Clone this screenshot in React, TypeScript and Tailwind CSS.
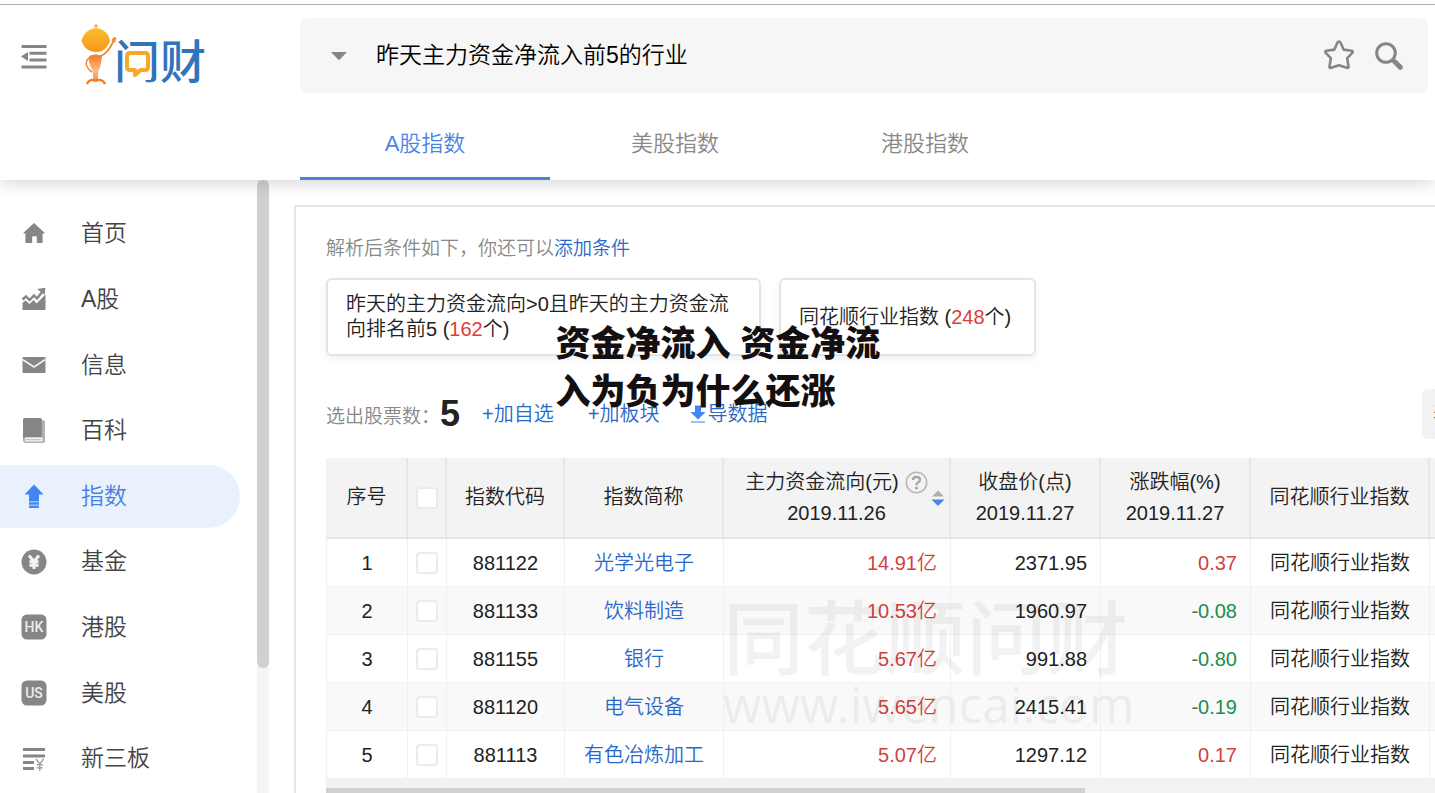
import type { ReactNode } from 'react';

interface NavItem {
  label: string;
  icon: ReactNode;
  active?: boolean;
}

interface Row {
  code: string;
  name: string;
  flow: string;
  price: string;
  change: number;
}

const svgProps = { width: 26, height: 26, viewBox: '0 0 26 26', 'aria-hidden': true } as const;

function Badge({ text }: { text: string }) {
  return (
    <svg {...svgProps}>
      <rect x="0.5" y="0.5" width="25" height="25" rx="5.5" fill="#868686" />
      <text x="13" y="18" textAnchor="middle" fontSize="14" fontWeight="500" fontFamily="Roboto, sans-serif" fill="#ececec">
        {text}
      </text>
    </svg>
  );
}

const navItems: NavItem[] = [
  {
    label: '首页',
    icon: (
      <svg {...svgProps}>
        <path d="M13 2 23.5 11.8Q24 12.6 23 12.6H21.6V21Q21.6 22 20.6 22H15.8V16.2Q15.8 15.2 14.8 15.2H12.2Q11.2 15.2 11.2 16.2V22H5.4Q4.4 22 4.4 21V12.6H3Q2 12.6 2.5 11.8Z" fill="#868686" />
      </svg>
    ),
  },
  {
    label: 'A股',
    icon: (
      <svg {...svgProps}>
        <path d="M1.5 24V17L4.5 14.5 8.5 18 12.5 14 15.5 17.5 24.5 8.5V23Q24.5 24 23.5 24Z" fill="#868686" />
        <path d="M1.5 13.5 5 10.5 8.5 14 13 9.5 16 12.5 21.5 5.5" fill="none" stroke="#868686" strokeWidth="2.4" />
        <path d="M16 3 24.5 1.8 23.5 9Z" fill="#868686" />
      </svg>
    ),
  },
  {
    label: '信息',
    icon: (
      <svg {...svgProps}>
        <rect x="1.5" y="5" width="23" height="16" rx="1.2" fill="#868686" />
        <path d="M1.5 7.5 13 15 24.5 7.5" fill="none" stroke="#f0f0f0" strokeWidth="1.8" />
      </svg>
    ),
  },
  {
    label: '百科',
    icon: (
      <svg {...svgProps}>
        <path d="M20 2.5 24 4V24Q24 26 22 26H5Q2 26 2 23V20H20Z" fill="#b0b0b0" />
        <path d="M4.5 20.5H21.5V24.5H4.5Q3.2 22.5 4.5 20.5Z" fill="#f4f4f4" />
        <path d="M2 22V2.5Q2 1 3.5 1H19Q20.8 1 20.8 2.8V20H4.5Q3 20 2 22Z" fill="#868686" />
        <path d="M4.5 22.7H20" stroke="#aaaaaa" strokeWidth="0.8" />
      </svg>
    ),
  },
  {
    label: '指数',
    active: true,
    icon: (
      <svg {...svgProps}>
        <path d="M13 1.5 22.5 11.5H18V18.5H8V11.5H3.5Z" fill="#4285f4" />
        <path d="M8 19.2H18V21.7H8ZM8 22.6H18V25H8Z" fill="#4285f4" />
      </svg>
    ),
  },
  {
    label: '基金',
    icon: (
      <svg {...svgProps}>
        <circle cx="13" cy="13" r="12.5" fill="#868686" />
        <path d="M8 6.5 13 12.5 18 6.5M13 12V20M8.5 12.8H17.5M8.5 16.2H17.5" fill="none" stroke="#f4f4f4" strokeWidth="3" />
      </svg>
    ),
  },
  { label: '港股', icon: <Badge text="HK" /> },
  { label: '美股', icon: <Badge text="US" /> },
  {
    label: '新三板',
    icon: (
      <svg {...svgProps}>
        <path d="M2 3.5H24M2 10H24M2 16.5H13M2 22.5H13" stroke="#868686" strokeWidth="2.8" />
        <path d="M15 13 18.8 18 22.6 13M18.8 18V25M15.5 18.8H22M15.5 21.8H22" fill="none" stroke="#999999" strokeWidth="1.3" />
      </svg>
    ),
  },
];

const tabs = ['A股指数', '美股指数', '港股指数'];

const rows: Row[] = [
  { code: '881122', name: '光学光电子', flow: '14.91亿', price: '2371.95', change: 0.37 },
  { code: '881133', name: '饮料制造', flow: '10.53亿', price: '1960.97', change: -0.08 },
  { code: '881155', name: '银行', flow: '5.67亿', price: '991.88', change: -0.8 },
  { code: '881120', name: '电气设备', flow: '5.65亿', price: '2415.41', change: -0.19 },
  { code: '881113', name: '有色冶炼加工', flow: '5.07亿', price: '1297.12', change: 0.17 },
];

function Logo() {
  return (
    <svg width="140" height="66" viewBox="0 0 140 66" role="img" aria-label="问财">
      <defs>
        <linearGradient id="head" x1="0" y1="0" x2="0" y2="1">
          <stop offset="0" stopColor="#fbc02a" />
          <stop offset="1" stopColor="#f7941f" />
        </linearGradient>
        <linearGradient id="body" x1="0" y1="0" x2="0" y2="1">
          <stop offset="0" stopColor="#f47b20" />
          <stop offset="0.6" stopColor="#fbb98a" />
          <stop offset="1" stopColor="#f58a3c" />
        </linearGradient>
      </defs>
      {/* Mascot */}
      <circle cx="17" cy="4" r="1.8" fill="#f5b04a" />
      <path d="M17 6C25 7 30 12 31 19C28 27 23 30 17 30C10 30 5 26 2.5 19C4 12 9 7 17 6Z" fill="url(#head)" />
      <path d="M20 35C28 32 32 25 34.5 19" fill="none" stroke="#f47b20" strokeWidth="1.8" />
      <ellipse cx="35" cy="18" rx="2" ry="3" transform="rotate(25 35 18)" fill="#f58a3c" />
      <path d="M10 34Q16 31 23 34Q22 44 19.5 49L18.5 60H14.5L13.5 48Q9 41 10 34Z" fill="url(#body)" />
      <path d="M12 35C5 38 6 45 13 50" fill="none" stroke="#f58a3c" strokeWidth="1.6" />
      <path d="M16 58Q10 57 8 62M17 58Q24 57 26 62" fill="none" stroke="#f47b20" strokeWidth="2.4" />
      {/* Wordmark with a speech bubble in its first character */}
      <text x="35" y="56" fontSize="46" fontWeight="500" fontFamily="Noto Sans CJK SC, sans-serif" fill="#2f74bd">
        问财
      </text>
      <rect x="45" y="28" width="27" height="30" fill="#ffffff" />
      <path d="M51 31H66Q69 31 69 34V45Q69 48 66 48H61.5L56 53V48H51Q48 48 48 45V34Q48 31 51 31Z" fill="none" stroke="#f9a72b" strokeWidth="4" strokeLinejoin="round" />
    </svg>
  );
}

function Header() {
  return (
    <header className="relative z-10 shrink-0 bg-white shadow-[0_1px_18px_rgba(0,0,0,0.2)]">
      <div className="mt-1 h-px bg-[#b4b4b4]" />
      <div className="flex items-start pt-[13px] pr-[7px]">
        <div className="flex w-[300px] shrink-0 items-center gap-[32px] pt-[4px] pl-[21px]">
          <button aria-label="收起菜单" className="pt-[4px] text-[#868686]">
            <svg width="26" height="26" viewBox="0 0 26 26" aria-hidden>
              <path d="M0.5 2.5H25.5M8.5 9.3H25.5M8.5 16H25.5M0.5 23H25.5" stroke="currentColor" strokeWidth="3" />
              <path d="M0 12.5 7 8V17Z" fill="currentColor" />
            </svg>
          </button>
          <Logo />
        </div>
        <form className="flex h-[75px] min-w-0 flex-1 items-center rounded-md bg-[#f6f6f6] pr-[25px] pl-[30px]">
          <button type="button" aria-label="展开" className="text-[#868686]">
            <svg width="18" height="10" viewBox="0 0 18 10" aria-hidden>
              <path d="M1 1H17L9.8 8.5Q9 9.3 8.2 8.5Z" fill="currentColor" />
            </svg>
          </button>
          <input
            aria-label="搜索"
            defaultValue="昨天主力资金净流入前5的行业"
            className="ml-[28px] min-w-0 flex-1 bg-transparent text-[23px] text-black outline-none"
          />
          <button type="button" aria-label="收藏" className="mr-[20px] text-[#868686]">
            <svg width="32" height="32" viewBox="0 1 32 32" fill="none" stroke="currentColor" strokeWidth="2.6" strokeLinejoin="round" aria-hidden>
              <path d="M16 2.5Q17 2.5 17.5 3.5L20.6 10.6L28.5 11.8Q30.5 12.3 29.3 13.9L24.2 19.2L25.5 27.6Q25.6 29.4 23.8 28.8L16 26.2L8.2 28.8Q6.4 29.4 6.5 27.6L7.8 19.2L2.7 13.9Q1.5 12.3 3.5 11.8L11.4 10.6L14.5 3.5Q15 2.5 16 2.5Z" />
            </svg>
          </button>
          <button aria-label="搜索" className="text-[#868686]">
            <svg width="28" height="28" viewBox="0 0 28 28" fill="none" stroke="currentColor" aria-hidden>
              <circle cx="11" cy="11" r="9.3" strokeWidth="3" />
              <path d="M17.5 17.5 20 20" strokeWidth="3" />
              <path d="M19.8 19.8 25.3 25.3" strokeWidth="5" strokeLinecap="round" />
            </svg>
          </button>
        </form>
      </div>
      <nav className="flex pt-[12px] pl-[300px]">
        {tabs.map((tab, i) => (
          <a
            key={tab}
            href="#"
            className={`flex h-[75px] w-[250px] items-center justify-center border-b-[3px] pt-[4px] text-[22px] ${
              i === 0 ? 'border-[#4a83d8] text-[#4a83e8]' : 'border-transparent text-[#888888]'
            }`}
          >
            {tab}
          </a>
        ))}
      </nav>
    </header>
  );
}

function Sidebar() {
  return (
    <aside className="flex w-[269px] shrink-0 justify-between">
      <nav className="flex w-[240px] flex-col justify-between pt-[22px] pb-[3px]">
        {navItems.map((item) => (
          <a
            key={item.label}
            href="#"
            className={`flex h-[63px] items-center gap-[34px] pl-[21px] text-[23px] ${
              item.active ? 'rounded-r-full bg-[#e9f1fd] text-[#4a7fe0]' : 'text-[#444444]'
            }`}
          >
            {item.icon}
            {item.label}
          </a>
        ))}
      </nav>
      <div className="w-3 bg-[#f4f4f4]">
        <div className="h-[488px] rounded-full bg-[#d0d0d0]" />
      </div>
    </aside>
  );
}

const card =
  'flex h-[78px] shrink-0 items-center rounded-md border-2 border-[#e4e4e4] px-[18px] leading-[25px] shadow-[0_4px_8px_rgba(0,0,0,0.06)]';

function Conditions() {
  return (
    <div className="flex gap-[18px]">
      <div className={`w-[435px] ${card}`}>
        <p>
          昨天的主力资金流向&gt;0且昨天的主力资金流向排名前5 (<span className="text-[#df3c36]">162</span>个)
        </p>
      </div>
      <div className={`w-[257px] ${card}`}>
        <p>
          同花顺行业指数 (<span className="text-[#df3c36]">248</span>个)
        </p>
      </div>
    </div>
  );
}

function Toolbar() {
  return (
    <div className="mt-[33px] flex h-[50px] items-center text-[#2a68c8]">
      <span className="pt-[6px] text-[19px] text-[#888888]">选出股票数：</span>
      <strong className="text-[36px] font-bold text-[#222222]">5</strong>
      <button className="ml-[22px]">+加自选</button>
      <button className="ml-[34px]">+加板块</button>
      <button className="ml-[31px] flex items-center">
        <svg width="17" height="20" viewBox="0 0 17 20" aria-hidden>
          <path d="M5 1.5H11V8H15.5L8 15.5 0.5 8H5Z" fill="#4285f4" />
          <path d="M1 18H15" stroke="#7fa9ee" strokeWidth="1.5" />
        </svg>
        导数据
      </button>
      <button className="ml-auto h-[50px] w-[108px] shrink-0 rounded-md bg-[#f2f2f2] pl-[11px] text-left text-[#444444]">
        表格展示
      </button>
    </div>
  );
}

const th = 'border-r-2 border-b-2 border-[#e6e6e6] font-[350]';
const td = 'border-r border-b border-[#f0f0f0]';
const box = 'mx-auto block size-[22px] appearance-none rounded-sm border-2 border-[#ebebeb] bg-white';

function ResultTable() {
  return (
    <div className="relative mt-[19px]">
      <table className="w-full table-fixed border-separate border-spacing-0 border-l border-[#f0f0f0]">
        <colgroup>
          <col className="w-[81px]" />
          <col className="w-[39px]" />
          <col className="w-[118px]" />
          <col className="w-[159px]" />
          <col className="w-[227px]" />
          <col className="w-[150px]" />
          <col className="w-[150px]" />
          <col className="w-[179px]" />
          <col />
        </colgroup>
        <thead>
          <tr className="h-[81px] bg-[#f3f3f3] leading-[31px]">
            <th className={th}>序号</th>
            <th className={th}>
              <input type="checkbox" aria-label="全选" className={box} />
            </th>
            <th className={th}>指数代码</th>
            <th className={th}>指数简称</th>
            <th className={`relative ${th}`}>
              <div className="flex items-center justify-center gap-[6px]">
                主力资金流向(元)
                <svg width="23" height="23" viewBox="0 0 23 23" aria-hidden>
                  <circle cx="11.5" cy="11.5" r="10.2" fill="none" stroke="#b8b8b8" strokeWidth="1.6" />
                  <path d="M8 9Q8 5.8 11.5 5.8Q15 5.8 15 8.8Q15 10.5 13 11.6Q11.5 12.5 11.5 14.3" fill="none" stroke="#a4a4a4" strokeWidth="2.3" />
                  <circle cx="11.5" cy="17" r="1.5" fill="#a4a4a4" />
                </svg>
              </div>
              2019.11.26
              <button aria-label="排序" className="absolute top-[32px] right-[4px]">
                <svg width="14" height="17" viewBox="0 0 14 17" aria-hidden>
                  <path d="M7 0.5 13 6.5H1Z" fill="#b0b0b0" />
                  <path d="M7 16 0.5 9.5H13.5Z" fill="#4a83e8" />
                </svg>
              </button>
            </th>
            <th className={th}>
              收盘价(点)
              <br />
              2019.11.27
            </th>
            <th className={th}>
              涨跌幅(%)
              <br />
              2019.11.27
            </th>
            <th className={th}>同花顺行业指数</th>
            <th className={th} />
          </tr>
        </thead>
        <tbody>
          {rows.map((row, i) => (
            <tr key={row.code} className="h-12 text-center even:bg-[#f9f9f9]">
              <td className={td}>{i + 1}</td>
              <td className={td}>
                <input type="checkbox" aria-label={row.name} className={box} />
              </td>
              <td className={td}>{row.code}</td>
              <td className={td}>
                <a href="#" className="text-[#2a68c8]">
                  {row.name}
                </a>
              </td>
              <td className={`pr-[13px] text-right text-[#d23f3f] ${td}`}>{row.flow}</td>
              <td className={`pr-[13px] text-right ${td}`}>{row.price}</td>
              <td className={`pr-[13px] text-right ${row.change < 0 ? 'text-[#17904d]' : 'text-[#d23f3f]'} ${td}`}>
                {row.change.toFixed(2)}
              </td>
              <td className={td}>同花顺行业指数</td>
              <td className={td} />
            </tr>
          ))}
        </tbody>
      </table>
      <div className="bg-[#f2f2f2] pt-[9px]">
        <div className="h-[9px] w-[759px] bg-[#d0d0d0]" />
      </div>

      {/* Watermark */}
      <div className="pointer-events-none absolute top-[140px] left-[397px] text-black/5" aria-hidden>
        <div className="text-[81px] leading-[84px] font-medium">同花顺问财</div>
        <div className="font-['Noto_Sans'] text-[49px] leading-[44px] font-normal">www.iwencai.com</div>
      </div>
    </div>
  );
}

export default function App() {
  return (
    <div className="relative flex h-screen flex-col overflow-hidden bg-white font-['Liberation_Sans','Noto_Sans_CJK_SC',sans-serif] text-[20px] font-[350] text-[#222222]">
      <Header />
      <div className="flex min-h-0 flex-1">
        <Sidebar />
        <main className="min-w-0 flex-1 overflow-hidden pt-[25px] pl-[25px]">
          <section className="-mr-[97px] border-2 border-[#e4e4e4] pt-[28px] pl-[30px]">
            <p className="mb-[15px] text-[19px] leading-[28px] text-[#888888]">
              解析后条件如下，你还可以
              <a href="#" className="text-[#2a68c8]">
                添加条件
              </a>
            </p>
            <Conditions />
            <Toolbar />
            <ResultTable />
          </section>
        </main>
      </div>

      {/* Caption */}
      <h1 className="pointer-events-none absolute top-[320px] left-1/2 w-[324px] -translate-x-1/2 text-[35px] leading-[48px] font-black whitespace-nowrap text-[#140f10]">
        资金净流入 资金净流
        <br />
        入为负为什么还涨
      </h1>
    </div>
  );
}
